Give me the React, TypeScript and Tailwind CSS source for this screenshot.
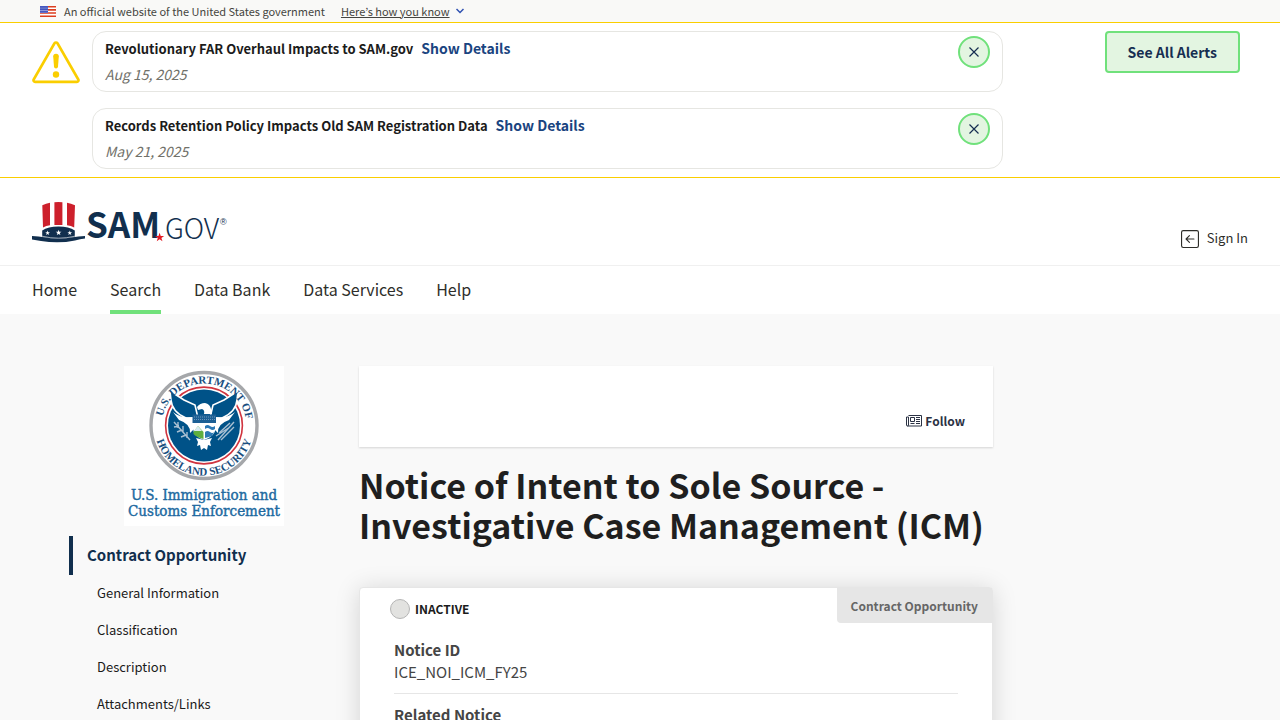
import { BsArrowLeftSquare } from "react-icons/bs";

const ALERTS = [
  { title: "Revolutionary FAR Overhaul Impacts to SAM.gov", date: "Aug 15, 2025" },
  { title: "Records Retention Policy Impacts Old SAM Registration Data", date: "May 21, 2025" }
];

const NAV = ["Home", "Search", "Data Bank", "Data Services", "Help"];

const SECTIONS = ["General Information", "Classification", "Description", "Attachments/Links"];

const FLAG_STARS = [0, 1, 2, 3].flatMap((row) => [0, 1, 2, 3].map((col) => ({ x: 1 + col * 2, y: 1 + row * 1.7 })));

const STAR = "M0 -5 1.2 -1.6 4.8 -1.5 1.9 0.6 3 4 0 2 -3 4 -1.9 0.6 -4.8 -1.5 -1.2 -1.6Z";

function FlagIcon() {
  return (
    <svg width="16" height="11" viewBox="0 0 16 11" aria-hidden>
      <path d="M0 0h16v11H0z" fill="#fff" />
      <path d="M0 0.8h16M0 3.9h16M0 7h16M0 10.2h16" stroke="#db3e1f" strokeWidth="1.6" />
      <path d="M0 0h8v7H0z" fill="#1e33b1" />
      {FLAG_STARS.map((s) => (
        <circle key={`${s.x}-${s.y}`} cx={s.x} cy={s.y} r="0.55" fill="#fff" />
      ))}
    </svg>
  );
}

function WarningIcon() {
  return (
    <svg width="48" height="43" viewBox="0 0 48 43" className="shrink-0" aria-hidden>
      <path
        d="M22.5 2.3a1.8 1.8 0 0 1 3 0L46.3 38.5a1.6 1.6 0 0 1-1.4 2.4H3.1a1.6 1.6 0 0 1-1.4-2.4Z"
        fill="none"
        stroke="#face00"
        strokeWidth="2.6"
      />
      <path d="M21.2 15.2Q21.2 12.7 24 12.7T26.8 15.2L26 25.8Q25.8 27.4 24 27.4T22 25.8Z" fill="#face00" />
      <circle cx="24" cy="33.5" r="3.2" fill="#face00" />
    </svg>
  );
}

function SamLogo() {
  return (
    <svg width="198" height="44" viewBox="0 0 198 44" className="overflow-visible" role="img" aria-label="SAM.gov">
      <path d="M10.3 5.2Q14 3.2 18 2.7V25.3Q14 25.8 11 27.6Z" fill="#cd202c" />
      <path d="M22.4 2.2Q26.5 1.8 30.4 2.2V25H22.4Z" fill="#cd202c" />
      <path d="M35 2.7Q39 3.2 43 5.2L42.2 27.6Q39 25.8 35 25.3Z" fill="#cd202c" />
      <path d="M10.2 37V30.6Q16 26.6 26.5 26.6T42.8 30.6V37Q26.5 41 10.2 37Z" fill="#112f4e" />
      <path d="M0 36Q7 36.4 12 37.3 26.5 39.9 41 37.3 46 36.2 53 36V38.5Q48 39 43 40.4 26.5 44 9 40.9L0 39.6Z" fill="#112f4e" />
      <path d="M10 36.2Q26.5 40.2 43 36.2" fill="none" stroke="#fff" strokeWidth="0.6" />
      <path d={STAR} transform="translate(15.6 33) scale(.5)" fill="#fff" />
      <path d={STAR} transform="translate(26.6 32.7) scale(.6)" fill="#fff" />
      <path d={STAR} transform="translate(37.8 33) scale(.5)" fill="#fff" />
      <text x="54" y="38" className="fill-[#112f4e] font-['Noto_Sans_CJK_KR',sans-serif] text-[35px] font-bold">
        SAM
      </text>
      <path d={STAR} transform="translate(127.6 37.4) scale(.95)" fill="#e31b23" />
      <text x="133" y="39" className="fill-[#112f4e] font-['Noto_Sans_CJK_KR',sans-serif] text-[28px] font-light">
        GOV
      </text>
      <text x="188" y="25" className="fill-[#112f4e] font-['Liberation_Sans',sans-serif] text-[9px]">
        ®
      </text>
    </svg>
  );
}

function AgencySeal() {
  return (
    <svg width="160" height="160" viewBox="0 0 160 160" role="img" aria-label="U.S. Immigration and Customs Enforcement">
      <defs>
        <path id="seal-top" d="M37.500 60a42.500 42.500 0 1 1 85 0a42.500 42.500 0 0 1-12 30" />
        <path id="seal-bottom" d="M30.500 60a49.500 49.500 0 0 0 99 0" />
      </defs>
      <path d="M0 0h160v160H0z" fill="#fff" />
      <circle cx="80" cy="59.5" r="53" fill="#fff" stroke="#a5a7aa" strokeWidth="3.4" />
      <circle cx="80" cy="59.5" r="38.4" fill="#fff" stroke="#d0343f" strokeWidth="1.6" />
      <circle cx="80" cy="59.5" r="36" fill="#005288" />
      {/* eagle: wings, underside, head and tail */}
      <path
        d="M46 25 60 34 71 39 74 52 62 52Q48 46 47 34Z M114 25 100 34 89 39 86 52 98 52Q112 46 113 34Z"
        fill="#005288"
        stroke="#fff"
        strokeWidth="1.6"
      />
      <path d="M49 46Q57 53 69 51L71 62 66 67Q67 58 55 54Z M111 46Q103 53 91 51L89 62 94 67Q93 58 105 54Z" fill="#fff" />
      <path d="M73 41Q76 37 81 37 86 38 87 43L88 48H80Q81 44 78 43L74 44Z" fill="#fff" />
      <path d="M69 49.500H91.500V62Q91.500 70 80 74Q69 70 69 62Z" fill="#fff" />
      <path d="M68.500 48.500H92V57H68.500Z" fill="#1c5f94" />
      <path d="M70 51h21M70 53.500h21" stroke="#7da3c4" strokeWidth="0.8" strokeDasharray="1 1" />
      <path d="M69.500 66 74 60 79.500 66V73Q72 71 69.500 68Z" fill="#5fae3f" />
      <path d="M70 65 74 60 78 65Z" fill="#d9ebf3" />
      <path d="M81 60q2.500-2 5 0t5 0v3q-2.500 2-5 0t-5 0ZM81 66q2.500-2 5 0t4 0l-2 4q-3 1-7 2Z" fill="#2c79b5" />
      <path d="M72 72 80 74 88 72 86 76 87 80 84 79 83 84 80 82 77 84 76 79 73 80 74 76Z" fill="#fff" />
      {/* olive branch and arrows */}
      <path
        d="M50 56 66 74M50 61l5-1M53 66l5-2M57 71l5-2M54 56l0 6M59 60v6M63 66v6M110 56 94 74M95 67l11-10M92 70l14-9M97 74l13-13"
        fill="none"
        stroke="#a8bfd2"
        strokeWidth="1.4"
      />
      <g className="fill-[#1a4f80] font-['Liberation_Serif',serif] text-[11px] font-bold">
        <text textAnchor="middle">
          <textPath href="#seal-top" startOffset="41%">
            U.S. DEPARTMENT OF
          </textPath>
        </text>
        <text textAnchor="middle">
          <textPath href="#seal-bottom" startOffset="50%">
            HOMELAND SECURITY
          </textPath>
        </text>
      </g>
      <g
        className="fill-[#20699f] font-['DejaVu_Serif_Condensed','DejaVu_Serif',serif] text-[15px]"
        stroke="#20699f"
        strokeWidth="0.4"
      >
        <text x="80" y="134" textAnchor="middle">
          U.S. Immigration and
        </text>
        <text x="80" y="150" textAnchor="middle">
          Customs Enforcement
        </text>
      </g>
    </svg>
  );
}

function NewspaperIcon() {
  return (
    <svg width="16" height="12" viewBox="0 0 16 12" fill="none" stroke="currentColor" aria-hidden>
      <path d="M2.500 0.500h13v10.500H1.500a1 1 0 0 1-1-1V2h2v8a1 1 0 0 1-1 1" />
      <path d="M4.500 2.500h4v4h-4zM4.500 8.500h4M10 2.500h4M10 4.500h4M10 6.500h4M10 8.500h4" />
    </svg>
  );
}

function GovBanner() {
  return (
    <div className="flex h-[23px] items-center border-b border-[#face00] bg-[#f9f9f7] px-10 text-[11px] text-[#454540]">
      <FlagIcon />
      <span className="ml-2">An official website of the United States government</span>
      <button type="button" className="ml-4 flex items-center gap-1.5">
        <span className="underline">Here’s how you know</span>
        <svg width="8" height="6" viewBox="0 0 8 6" fill="none" stroke="#2c4fb0" strokeWidth="1.5" aria-hidden>
          <path d="M0.500 1 4 4.500 7.500 1" />
        </svg>
      </button>
    </div>
  );
}

function AlertCard({ title, date }: { title: string; date: string }) {
  return (
    <li className="flex h-[61px] justify-between rounded-[14px] border border-[#e6e6e2] px-3 pt-1">
      <div>
        <p className="text-[13px] leading-6 font-bold text-[#1b1b1b]">
          {title}
          <button type="button" className="ml-2 text-[14px] text-[#1a4480]">
            Show Details
          </button>
        </p>
        <p className="text-[14px] leading-[26px] text-[#71716a] italic">{date}</p>
      </div>
      <button
        type="button"
        aria-label={`Dismiss ${title}`}
        className="flex size-8 items-center justify-center rounded-full border-2 border-[#70e17b] bg-[#e3f5e1] text-[#162e51]"
      >
        <svg width="10" height="10" viewBox="0 0 10 10" fill="none" stroke="currentColor" strokeWidth="1.2" aria-hidden>
          <path d="M0.500 0.500 9.500 9.500M9.500 0.500 0.500 9.500" />
        </svg>
      </button>
    </li>
  );
}

function Alerts() {
  return (
    <section aria-label="Alerts" className="flex items-start border-b border-[#face00] py-2 pr-10 pl-8">
      <div className="pt-2.5">
        <WarningIcon />
      </div>
      <ul className="ml-3 flex flex-1 flex-col gap-4">
        {ALERTS.map((alert) => (
          <AlertCard key={alert.title} {...alert} />
        ))}
      </ul>
      <div className="flex w-[237px] justify-end">
        <button
          type="button"
          className="h-[42px] rounded border-2 border-[#70e17b] bg-[#e3f5e1] px-[21px] text-[14px] font-bold text-[#162e51]"
        >
          See All Alerts
        </button>
      </div>
    </section>
  );
}

function Header() {
  return (
    <header>
      <div className="flex h-[88px] items-start justify-between border-b border-[#f0f0f0] px-8 pt-[22px]">
        <a href="#home">
          <SamLogo />
        </a>
        <a href="#sign-in" className="flex items-end gap-2 pt-7 text-[13px] leading-5 text-[#2e2e2a]">
          <BsArrowLeftSquare size={18} aria-hidden />
          Sign In
        </a>
      </div>
      <nav aria-label="Primary" className="flex h-12 gap-[33px] px-8 text-[16px] text-[#2e2e2a]">
        {NAV.map((item) => (
          <a
            key={item}
            href="#nav"
            className={
              item === "Search"
                ? "flex items-center border-y-4 border-t-transparent border-b-[#70e17b] pb-0.5"
                : "flex items-center pb-0.5"
            }
          >
            {item}
          </a>
        ))}
      </nav>
    </header>
  );
}

function Sidebar() {
  return (
    <aside>
      <div className="flex justify-center">
        <AgencySeal />
      </div>
      <nav aria-label="On this page" className="mt-2.5 flex flex-col">
        <a
          href="#opportunity"
          className="flex h-[39px] items-center border-l-4 border-[#112f4e] pl-3.5 text-[15px] font-bold text-[#112f4e]"
        >
          Contract Opportunity
        </a>
        {SECTIONS.map((section) => (
          <a key={section} href="#section" className="flex h-[37px] items-center pb-0.5 pl-7 text-[13px] text-[#1b1b1b]">
            {section}
          </a>
        ))}
      </nav>
    </aside>
  );
}

function Opportunity() {
  return (
    <main>
      <div className="flex h-[81px] items-end justify-end bg-white px-7 pb-4 shadow-[0_1px_2px_rgba(0,0,0,0.15)]">
        <button type="button" className="flex items-center gap-[3px] text-[12px] leading-5 font-bold text-[#2b3244]">
          <NewspaperIcon />
          Follow
        </button>
      </div>
      <h1 className="mt-[18px] text-[34px] leading-10 font-bold text-[#1f1f1f]">
        Notice of Intent to Sole Source - Investigative Case Management (ICM)
      </h1>
      <section className="mt-[42px] min-h-60 rounded-sm border border-[#e6e6e6] bg-white shadow-[0_2px_24px_rgba(0,0,0,0.15)]">
        <div className="flex items-start justify-between pl-[30px]">
          <div className="flex h-[42px] items-center gap-[5px] text-[12px] font-bold text-[#1b1b1b]">
            <span className="size-5 rounded-full border border-[#b5b5b5] bg-[#e2e2e0]" />
            INACTIVE
          </div>
          <span className="flex h-[35px] items-center rounded-bl-sm bg-[#e6e6e6] px-3.5 text-[12px] font-bold text-[#666]">
            Contract Opportunity
          </span>
        </div>
        <dl className="mx-[34px] mt-[9px] text-[15px] leading-[22px] text-[#454545]">
          <dt className="font-bold">Notice ID</dt>
          <dd className="border-b border-[#e6e6e6] pb-2.5">ICE_NOI_ICM_FY25</dd>
          <dt className="pt-2.5 font-bold">Related Notice</dt>
        </dl>
      </section>
    </main>
  );
}

export default function App() {
  return (
    <div className="h-screen overflow-y-auto bg-white font-['Noto_Sans_CJK_KR',sans-serif] [scrollbar-width:none]">
      <GovBanner />
      <Alerts />
      <Header />
      <div className="grid grid-cols-[270fr_634fr_198fr] gap-5 bg-[#f9f9f9] px-[69px] pt-[52px] pb-8">
        <Sidebar />
        <Opportunity />
      </div>
    </div>
  );
}
